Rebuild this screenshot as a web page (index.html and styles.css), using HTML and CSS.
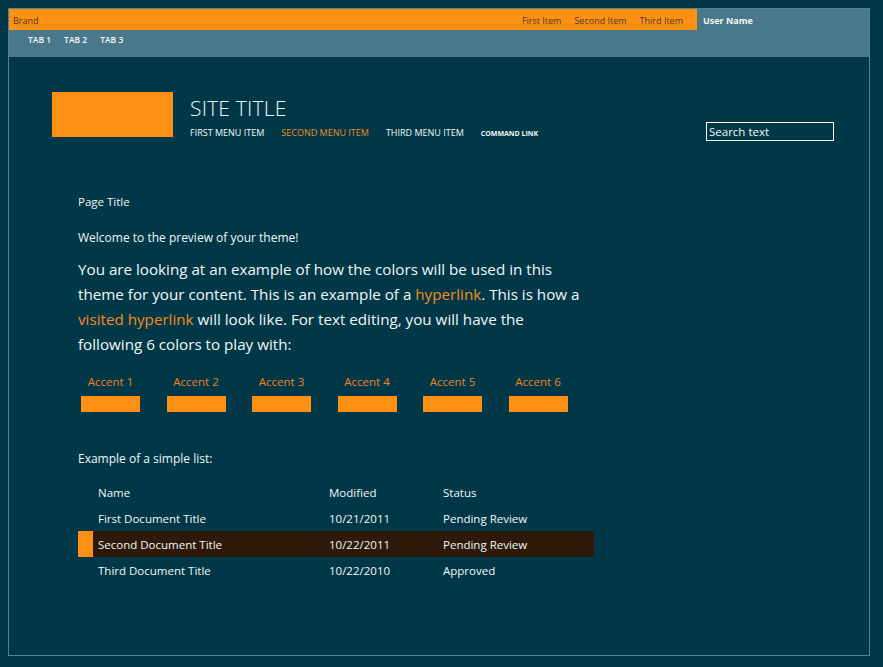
FILE: index.html
```html
<!DOCTYPE html>
<html>
<head>
<meta charset="utf-8">
<link rel="stylesheet" href="styles.css">
</head>
<body>
<div class="frame">
  <div class="suitebar">
    <div class="suite-left">
      <span class="brand">Brand</span>
      <nav class="suite-links">
        <span>First Item</span>
        <span>Second Item</span>
        <span>Third Item</span>
      </nav>
    </div>
    <div class="user">User Name</div>
  </div>
  <div class="tabbar">
    <span>TAB 1</span>
    <span>TAB 2</span>
    <span>TAB 3</span>
  </div>
  <header class="masthead">
    <div class="logo"></div>
    <div class="title-block">
      <div class="site-title">SITE TITLE</div>
      <nav class="menu">
        <span>FIRST MENU ITEM</span>
        <span class="sel">SECOND MENU ITEM</span>
        <span>THIRD MENU ITEM</span>
        <span class="cmd">COMMAND LINK</span>
      </nav>
    </div>
    <div class="search">Search text</div>
  </header>
  <main class="content">
    <div class="page-title">Page Title</div>
    <div class="welcome">Welcome to the preview of your theme!</div>
    <p class="intro">You are looking at an example of how the colors will be used in this theme for your content. This is an example of a <span class="link">hyperlink</span>. This is how a <span class="link">visited hyperlink</span> will look like. For text editing, you will have the following 6 colors to play with:</p>
    <div class="accents">
      <div class="accent"><span>Accent 1</span><i></i></div>
      <div class="accent"><span>Accent 2</span><i></i></div>
      <div class="accent"><span>Accent 3</span><i></i></div>
      <div class="accent"><span>Accent 4</span><i></i></div>
      <div class="accent"><span>Accent 5</span><i></i></div>
      <div class="accent"><span>Accent 6</span><i></i></div>
    </div>
    <div class="list-title">Example of a simple list:</div>
    <div class="list">
      <div class="row head"><b></b><span>Name</span><span>Modified</span><span>Status</span></div>
      <div class="row"><b></b><span>First Document Title</span><span>10/21/2011</span><span>Pending Review</span></div>
      <div class="row hl"><b></b><span>Second Document Title</span><span>10/22/2011</span><span>Pending Review</span></div>
      <div class="row"><b></b><span>Third Document Title</span><span>10/22/2010</span><span>Approved</span></div>
    </div>
  </main>
</div>
</body>
</html>
```
FILE: styles.css
```css
html, body {
  margin: 0;
  padding: 0;
  background: #013847;
}
body {
  padding: 8px 13px 11px 8px;
  font-family: "Open Sans", "Noto Sans", sans-serif;
  color: #f2f6f6;
}
.frame {
  border: 1px solid #4f8592;
  height: 646px;
  box-sizing: content-box;
}
.suitebar {
  display: flex;
  height: 21px;
}
.suite-left {
  flex: 0 0 688px;
  background: #fe9015;
  display: flex;
  align-items: center;
  justify-content: space-between;
  font-size: 9px;
  color: #4b3d1d;
  padding-top: 2px;
  box-sizing: border-box;
}
.brand {
  padding-left: 4px;
}
.suite-links {
  display: flex;
  gap: 13px;
  padding-right: 14px;
}
.user {
  flex: 1;
  background: #48788a;
  font-size: 9px;
  font-weight: 700;
  color: #f4f8f8;
  display: flex;
  align-items: center;
  padding: 2px 0 0 6px;
}
.tabbar {
  height: 27px;
  background: #48788a;
  display: flex;
  gap: 13px;
  padding: 4px 0 0 19px;
  box-sizing: border-box;
  font-size: 8.5px;
  font-weight: 600;
  color: #f4f8f8;
}
.masthead {
  display: flex;
  align-items: flex-start;
  padding: 35px 35px 0 43px;
}
.logo {
  width: 121px;
  height: 45px;
  background: #fe9015;
}
.title-block {
  margin-left: 17px;
  flex: 1;
}
.site-title {
  font-size: 21px;
  font-weight: 300;
  line-height: 24px;
  margin-top: 4px;
  letter-spacing: 0.2px;
}
.menu {
  display: flex;
  align-items: baseline;
  gap: 17px;
  font-size: 9px;
  margin-top: 6px;
}
.menu .sel {
  color: #f08a24;
}
.menu .cmd {
  font-size: 7px;
  font-weight: 700;
}
.search {
  width: 124px;
  height: 17px;
  border: 1px solid #ffffff;
  font-size: 11.5px;
  line-height: 17px;
  padding-left: 2px;
  margin-top: 30px;
}
.content {
  padding: 53px 0 0 69px;
}
.page-title {
  font-size: 11.5px;
}
.welcome {
  font-size: 12px;
  margin-top: 20px;
}
.intro {
  font-size: 15.2px;
  line-height: 25px;
  width: 505px;
  margin: 11px 0 0;
}
.link {
  color: #f7891f;
}
.accents {
  display: flex;
  gap: 26.5px;
  margin-top: 17px;
  padding-left: 3px;
}
.accent {
  display: flex;
  flex-direction: column;
  align-items: center;
  width: 59px;
}
.accent span {
  font-size: 11.5px;
  color: #f0821e;
  line-height: 16px;
}
.accent i {
  display: block;
  width: 59px;
  height: 16px;
  background: #fe9015;
  margin-top: 6px;
}
.list-title {
  font-size: 12px;
  margin-top: 38px;
}
.list {
  margin-top: 12px;
  width: 516px;
  font-size: 11.5px;
}
.row {
  display: flex;
  align-items: center;
  height: 26px;
}
.row b {
  width: 15px;
  height: 26px;
  margin-right: 5px;
}
.row span:nth-of-type(1) {
  width: 231px;
}
.row span:nth-of-type(2) {
  width: 114px;
}
.row.hl {
  background: #2d1a0b;
}
.row.hl b {
  background: #fe9015;
}
```
